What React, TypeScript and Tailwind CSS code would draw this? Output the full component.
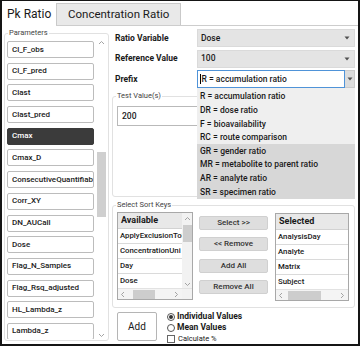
import React from 'react';

const params = [
  'Cl_F_obs',
  'Cl_F_pred',
  'Clast',
  'Clast_pred',
  'Cmax',
  'Cmax_D',
  'ConsecutiveQuantifiabl',
  'Corr_XY',
  'DN_AUCall',
  'Dose',
  'Flag_N_Samples',
  'Flag_Rsq_adjusted',
  'HL_Lambda_z',
  'Lambda_z',
];

const prefixes = [
  'R = accumulation ratio',
  'DR = dose ratio',
  'F = bioavailability',
  'RC = route comparison',
  'GR = gender ratio',
  'MR = metabolite to parent ratio',
  'AR = analyte ratio',
  'SR = specimen ratio',
];

const Chevron = ({ dir }: { dir: 'up' | 'down' | 'left' | 'right' }) => {
  const pts = {
    up: '1,4 3.5,1.5 6,4',
    down: '1,2 3.5,4.5 6,2',
    left: '4,1 1.5,3.5 4,6',
    right: '2,1 4.5,3.5 2,6',
  }[dir];
  return (
    <svg width="7" height="7" viewBox="0 0 7 7" className="shrink-0">
      <polyline points={pts} fill="none" stroke="#9a9a9a" strokeWidth="0.9" />
    </svg>
  );
};

const DropArrow = () => (
  <svg width="6" height="4" viewBox="0 0 6 4" className="shrink-0">
    <polygon points="0.5,0.5 5.5,0.5 3,3.5" fill="#505050" />
  </svg>
);

const HScroll = ({ thumbLeft, thumbWidth }: { thumbLeft: string; thumbWidth: string }) => (
  <div className="h-[11px] flex items-center bg-[#f4f4f4] border-t border-[#e2e2e2] px-[2px]">
    <Chevron dir="left" />
    <div className="flex-1 h-[9px] flex">
      <div className={thumbLeft} />
      <div className={`${thumbWidth} h-full bg-[#cdcdcd]`} />
    </div>
    <Chevron dir="right" />
  </div>
);

const ListBox = ({ title, items, vscroll }: { title: string; items: string[]; vscroll?: boolean }) => (
  <div className={`${vscroll ? 'w-[76px]' : 'w-[74px]'} h-[88px] border border-[#a8a8a8] bg-white flex flex-col`}>
    <div className="flex flex-1 min-h-0">
      <div className="flex-1 min-w-0 overflow-hidden">
        <div className="h-[16px] bg-[#e8e8e8] border-b border-[#d2d2d2] flex items-center pl-[3px] text-[9px] font-bold">
          {title}
        </div>
        {items.map((it) => (
          <div
            key={it}
            className="h-[15px] border-b border-[#dadada] flex items-center pl-[2px] text-[7.8px] font-medium whitespace-nowrap"
          >
            {it}
          </div>
        ))}
      </div>
      {vscroll && (
        <div className="w-[10px] bg-[#f2f2f2] flex flex-col items-center pt-[3px]">
          <Chevron dir="up" />
          <div className="w-[9px] h-[17px] bg-[#cdcdcd] mt-[2px]" />
          <div className="flex-1" />
          <Chevron dir="down" />
        </div>
      )}
    </div>
    {vscroll ? (
      <div className="flex">
        <div className="flex-1">
          <HScroll thumbLeft="w-[6px]" thumbWidth="w-[22px]" />
        </div>
        <div className="w-[10px] bg-[#f2f2f2] border-t border-[#e2e2e2]" />
      </div>
    ) : (
      <HScroll thumbLeft="w-[3px]" thumbWidth="w-[33px]" />
    )}
  </div>
);

const Btn = ({ label }: { label: string }) => (
  <div className="h-[14px] w-[69px] rounded-[2px] bg-[#dedede] border border-[#d0d0d0] flex items-center justify-center text-[8px] font-medium text-[#333]">
    {label}
  </div>
);

export default function App() {
  return (
    <div className="relative w-[360px] h-[346px] overflow-hidden border-x-2 border-t border-b-2 border-[#151515] bg-white font-['Roboto',Arial,sans-serif] text-[#1a1a1a]">
      {/* tabs */}
      <div className="h-[25px] flex items-end border-b border-[#cdcdcd]">
        <div className="relative z-10 h-[25px] -mb-px w-[54px] bg-white flex items-center pl-[5px] text-[12px]">
          Pk Ratio
        </div>
        <div className="h-[22px] bg-[#e9e9e9] border border-b-0 border-[#c9c9c9] px-[11px] flex items-center text-[11.5px]">
          Concentration Ratio
        </div>
      </div>

      <div className="flex h-[318px]">
        {/* parameters */}
        <div className="w-[106px] pl-[2px] pt-[2px]">
          <fieldset className="w-[104px] h-[313px] border border-[#e1e1e1] rounded-[3px] px-[2px]">
            <legend className="ml-[1px] px-[1px] text-[7.5px] leading-[10px] text-[#444]">Parameters</legend>
            <div className="flex gap-[2px]">
              <div className="w-[87px] h-[301px] pt-[3px] overflow-hidden flex flex-col gap-[4.7px]">
                {params.map((p) => (
                  <div
                    key={p}
                    className={`h-[17px] shrink-0 rounded-[2px] border px-[4px] flex items-center text-[8px] font-medium whitespace-nowrap overflow-hidden ${
                      p === 'Cmax' ? 'bg-[#3b3b3b] border-[#3b3b3b] text-white' : 'bg-white border-[#bcbcbc]'
                    }`}
                  >
                    {p}
                  </div>
                ))}
              </div>
              <div className="w-[10px] h-[301px] flex flex-col items-center pt-[2px]">
                <Chevron dir="up" />
                <div className="h-[105px]" />
                <div className="w-[9px] h-[65px] bg-[#cfcfcf]" />
                <div className="flex-1" />
                <Chevron dir="down" />
              </div>
            </div>
          </fieldset>
        </div>

        {/* right side */}
        <div className="flex-1 pl-[4px] pr-[3px] pt-[3px]">
          <div className="flex flex-col gap-[2.5px]">
            <div className="flex items-center h-[18px]">
              <div className="w-[85px] pl-[3px] text-[8.5px] font-bold">Ratio Variable</div>
              <div className="w-[158px] h-full bg-[#e4e4e4] border border-[#dadada] flex items-center justify-between pl-[3px] pr-[4px] text-[8.5px] font-medium">
                Dose
                <DropArrow />
              </div>
            </div>
            <div className="flex items-center h-[18px]">
              <div className="w-[85px] pl-[3px] text-[8.5px] font-bold">Reference Value</div>
              <div className="w-[158px] h-full bg-[#e4e4e4] border border-[#dadada] flex items-center justify-between pl-[3px] pr-[4px] text-[8.5px] font-medium">
                100
                <DropArrow />
              </div>
            </div>
            <div className="flex items-center h-[18px]">
              <div className="w-[85px] pl-[3px] text-[8.5px] font-bold">Prefix</div>
              <div className="w-[158px] h-full flex">
                <div className="flex-1 bg-white border border-[#4f93d8] flex items-center pl-[2px] text-[8.5px] font-medium">
                  <span className="w-px h-[10px] bg-black mr-[0.5px]" />
                  R = accumulation ratio
                </div>
                <div className="w-[10px] bg-[#dcdcdc] border-y border-r border-[#cacaca] flex items-center justify-center">
                  <DropArrow />
                </div>
              </div>
            </div>
          </div>

          <fieldset className="mt-[3px] h-[106px] border border-[#e1e1e1] rounded-[3px]">
            <legend className="ml-[3px] px-[1px] text-[7.5px] leading-[10px] text-[#444]">Test Value(s)</legend>
            <div className="ml-[4px] mt-[5px] w-[150px] h-[20px] border border-[#b9b9b9] bg-white flex items-center pl-[4px] text-[8.5px] font-medium">
              200
            </div>
          </fieldset>

          <fieldset className="mt-[3px] h-[108px] border border-[#e1e1e1] rounded-[3px]">
            <legend className="ml-[3px] px-[1px] text-[7.5px] leading-[10px] text-[#444]">Select Sort Keys</legend>
            <div className="flex pl-[4px] pt-[2px]">
              <ListBox title="Available" items={['ApplyExclusionTol', 'ConcentrationUni', 'Day', 'Dose']} vscroll />
              <div className="ml-[6px] pt-[4px] flex flex-col gap-[7.3px]">
                <Btn label="Select >>" />
                <Btn label="<< Remove" />
                <Btn label="Add All" />
                <Btn label="Remove All" />
              </div>
              <div className="ml-[7px] pt-[1px]">
                <ListBox title="Selected" items={['AnalysisDay', 'Analyte', 'Matrix', 'Subject']} />
              </div>
            </div>
          </fieldset>

          <div className="flex items-start mt-[4px] pl-[5px]">
            <div className="w-[40px] h-[29px] border border-[#b5b5b5] rounded-[2px] bg-white flex items-center justify-center text-[10px]">
              Add
            </div>
            <div className="ml-[10px] -mt-[1px] flex flex-col">
              <div className="h-[11px] flex items-center gap-[2px]">
                <span className="w-[8px] h-[8px] rounded-full border border-[#555] flex items-center justify-center">
                  <span className="w-[4px] h-[4px] rounded-full bg-[#333]" />
                </span>
                <span className="text-[8.5px] font-bold">Individual Values</span>
              </div>
              <div className="h-[11px] flex items-center gap-[2px]">
                <span className="w-[8px] h-[8px] rounded-full border border-[#555]" />
                <span className="text-[8.5px] font-bold">Mean Values</span>
              </div>
              <div className="h-[11px] flex items-center gap-[3px]">
                <span className="w-[8px] h-[8px] border border-[#666] bg-white" />
                <span className="text-[7.5px] leading-[9px]">Calculate %</span>
              </div>
            </div>
          </div>
        </div>
      </div>

      {/* open prefix dropdown */}
      <div className="absolute left-[195px] top-[87px] w-[158px] pt-[2px] bg-[#efefef] flex flex-col">
        {prefixes.map((p, i) => (
          <div
            key={p}
            className={`h-[13.6px] flex items-center pl-[3px] text-[8.5px] font-medium ${
              i < 4 ? 'bg-[#efefef]' : 'bg-[#d7d7d7]'
            }`}
          >
            {p}
          </div>
        ))}
      </div>
    </div>
  );
}
